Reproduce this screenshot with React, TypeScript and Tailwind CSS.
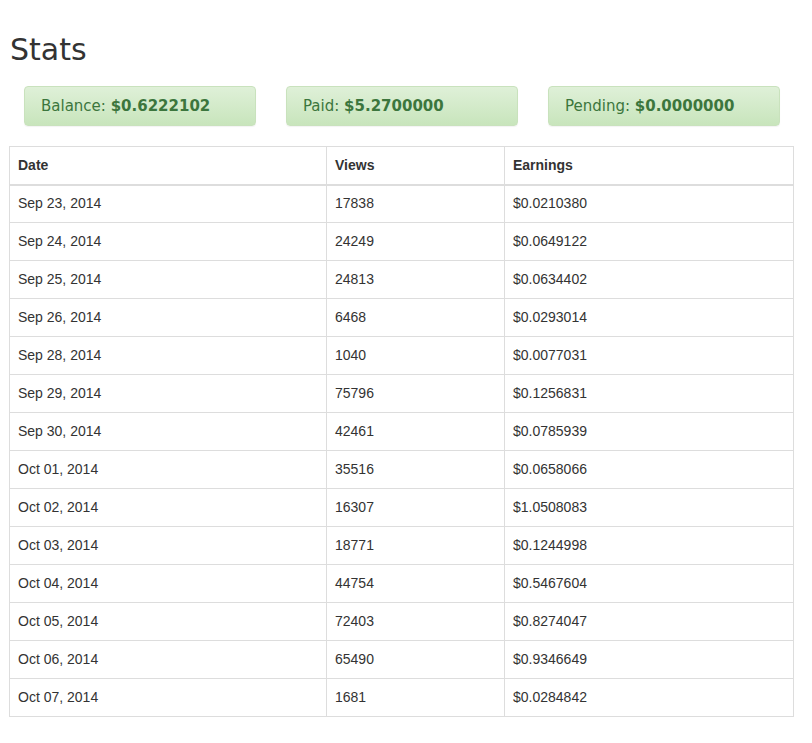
const rows: [string, string, string][] = [
  ["Sep 23, 2014", "17838", "$0.0210380"],
  ["Sep 24, 2014", "24249", "$0.0649122"],
  ["Sep 25, 2014", "24813", "$0.0634402"],
  ["Sep 26, 2014", "6468", "$0.0293014"],
  ["Sep 28, 2014", "1040", "$0.0077031"],
  ["Sep 29, 2014", "75796", "$0.1256831"],
  ["Sep 30, 2014", "42461", "$0.0785939"],
  ["Oct 01, 2014", "35516", "$0.0658066"],
  ["Oct 02, 2014", "16307", "$1.0508083"],
  ["Oct 03, 2014", "18771", "$0.1244998"],
  ["Oct 04, 2014", "44754", "$0.5467604"],
  ["Oct 05, 2014", "72403", "$0.8274047"],
  ["Oct 06, 2014", "65490", "$0.9346649"],
  ["Oct 07, 2014", "1681", "$0.0284842"],
];

function Box({ label, value }: { label: string; value: string }) {
  return (
    <div className="w-[232px] h-[40px] rounded-[4px] border border-[#c9e2bd] bg-gradient-to-b from-[#dff0d8] to-[#c8e5bc] text-[#3c763d] text-[15px] flex items-center pl-[16px] shadow-[0_1px_1px_rgba(0,0,0,0.05)] font-[family-name:Comic_Sans_MS,DejaVu_Sans,sans-serif]">
      <span>{label}:&nbsp;</span>
      <b>{value}</b>
    </div>
  );
}

export default function App() {
  return (
    <div className="w-[812px] h-[743px] bg-white text-[#333] font-[family-name:Liberation_Sans,Arial,sans-serif] overflow-hidden">
      <div className="pl-[9px] pr-[18px]">
        <h1 className="pt-[30px] h-[86px] text-[30px] leading-[40px] pl-[1px] text-[#333] font-[family-name:Comic_Sans_MS,DejaVu_Sans,sans-serif]">Stats</h1>
        <div className="flex gap-[30px] pl-[15px] h-[60px]">
          <Box label="Balance" value="$0.6222102" />
          <Box label="Paid" value="$5.2700000" />
          <Box label="Pending" value="$0.0000000" />
        </div>
        <table className="w-[785px] border border-[#ddd] border-collapse text-[14px]">
          <thead>
            <tr className="h-[38px] border-b-2 border-[#ddd]">
              <th className="w-[317px] text-left font-bold px-[8px] border-r border-[#ddd]">Date</th>
              <th className="w-[178px] text-left font-bold px-[8px] border-r border-[#ddd]">Views</th>
              <th className="text-left font-bold px-[8px]">Earnings</th>
            </tr>
          </thead>
          <tbody>
            {rows.map((r) => (
              <tr key={r[0]} className="h-[38px] border-t border-[#ddd]">
                <td className="px-[8px] border-r border-[#ddd]">{r[0]}</td>
                <td className="px-[8px] border-r border-[#ddd]">{r[1]}</td>
                <td className="px-[8px]">{r[2]}</td>
              </tr>
            ))}
          </tbody>
        </table>
      </div>
    </div>
  );
}
